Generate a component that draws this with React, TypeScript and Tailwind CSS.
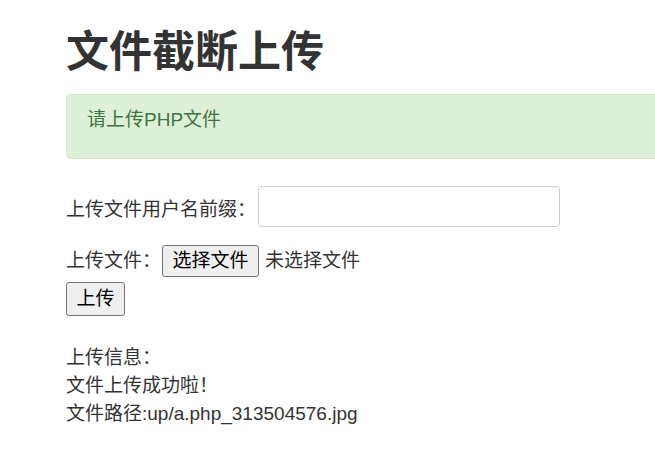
import React from 'react';

const FONT = { fontFamily: '"Liberation Sans", "Noto Sans CJK SC", sans-serif' };

export default function App() {
  return (
    <div className="min-h-screen w-full overflow-hidden bg-white text-[#333]" style={FONT}>
      <div className="pl-[66px] pt-[28px] w-[1000px]">
        <h1 className="text-[43px] leading-[48px] font-bold text-[#333]">文件截断上传</h1>

        {/* alert */}
        <div className="mt-[18px] h-[65px] w-[700px] rounded-[4px] border border-[#d6e9c6] bg-[#dff0d8] pl-[20px] pt-[13px] text-[19px] leading-[24px] text-[#3c763d]">
          请上传PHP文件
        </div>

        <form className="mt-[27px] text-[19px]" onSubmit={(e) => e.preventDefault()}>
          <div className="flex items-center h-[41px]">
            <span className="mt-[7px] leading-[24px]">上传文件用户名前缀：</span>
            <input
              type="text"
              className="ml-[2px] h-[41px] w-[302px] rounded-[4px] border border-[#ccc] bg-white px-3 outline-none"
            />
          </div>

          <div className="mt-[18px] flex items-center h-[32px]">
            <span className="leading-[24px]">上传文件：</span>
            <span className="ml-[1px] flex h-[32px] w-[97px] items-center justify-center rounded-[3px] border border-[#767676] bg-[#efefef] text-black">
              选择文件
            </span>
            <span className="ml-[6px] leading-[24px]">未选择文件</span>
          </div>

          <div className="mt-[5px]">
            <button type="submit" className="h-[34px] w-[59px] rounded-[3px] border border-[#767676] bg-[#efefef] text-[19px] text-black">
              上传
            </button>
          </div>
        </form>

        <div className="mt-[28px] text-[19px] leading-[28px]">
          <div>上传信息：</div>
          <div>文件上传成功啦！</div>
          <div>文件路径:up/a.php_313504576.jpg</div>
        </div>
      </div>
    </div>
  );
}
